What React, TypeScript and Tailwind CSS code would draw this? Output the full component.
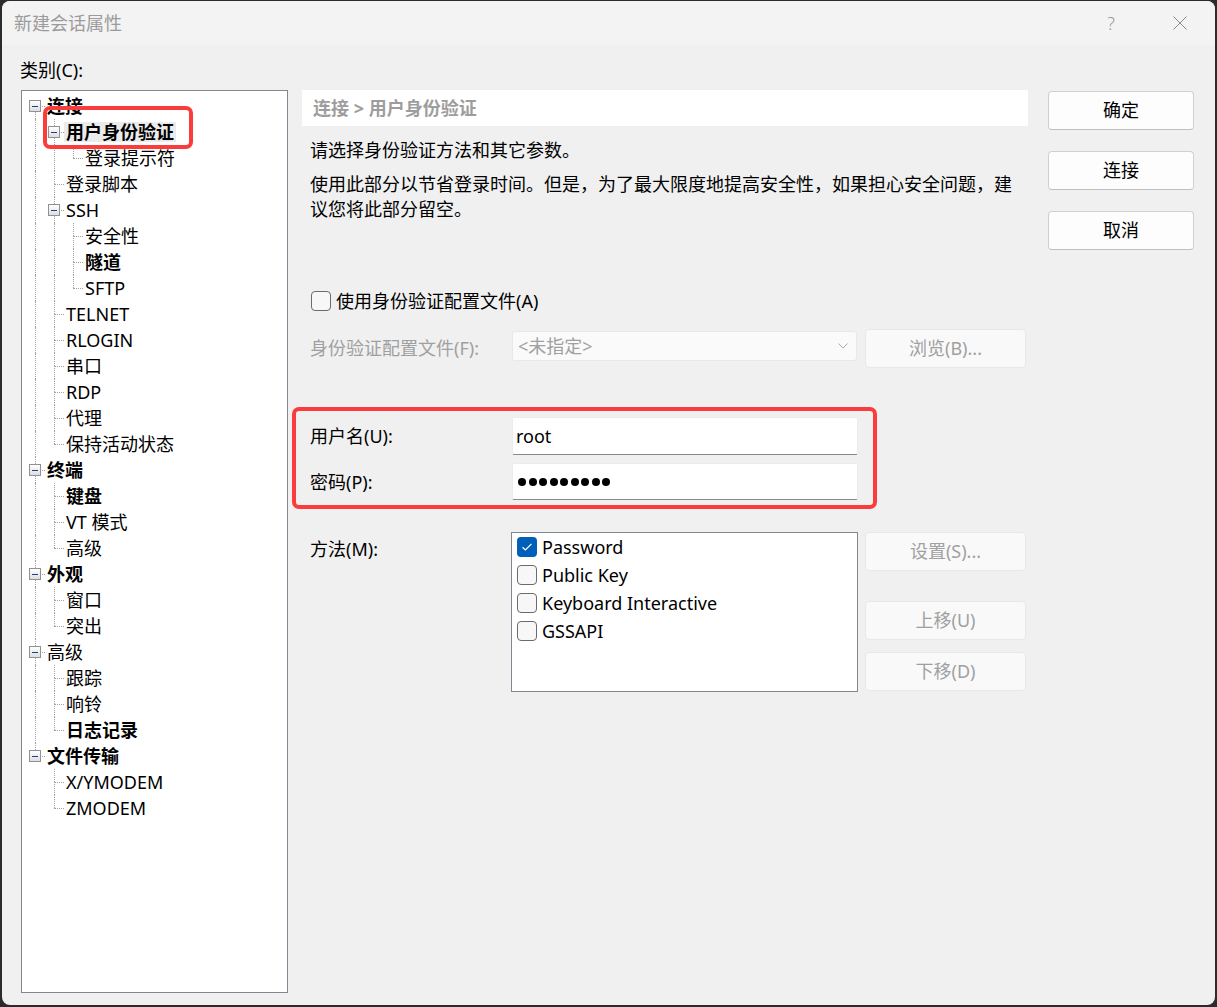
import React from 'react';

type TreeNode = { label: string; bold?: boolean; selected?: boolean; children?: TreeNode[] };

const tree: TreeNode[] = [
  {
    label: '连接',
    bold: true,
    children: [
      { label: '用户身份验证', bold: true, selected: true, children: [{ label: '登录提示符' }] },
      { label: '登录脚本' },
      { label: 'SSH', children: [{ label: '安全性' }, { label: '隧道', bold: true }, { label: 'SFTP' }] },
      { label: 'TELNET' },
      { label: 'RLOGIN' },
      { label: '串口' },
      { label: 'RDP' },
      { label: '代理' },
      { label: '保持活动状态' },
    ],
  },
  { label: '终端', bold: true, children: [{ label: '键盘', bold: true }, { label: 'VT 模式' }, { label: '高级' }] },
  { label: '外观', bold: true, children: [{ label: '窗口' }, { label: '突出' }] },
  { label: '高级', children: [{ label: '跟踪' }, { label: '响铃' }, { label: '日志记录', bold: true }] },
  { label: '文件传输', bold: true, children: [{ label: 'X/YMODEM' }, { label: 'ZMODEM' }] },
];

type Row = { node: TreeNode; level: number; first: boolean; last: boolean; rails: boolean[] };

const flatten = (nodes: TreeNode[], level: number, rails: boolean[], out: Row[]) => {
  nodes.forEach((node, i) => {
    const last = i === nodes.length - 1;
    out.push({ node, level, first: i === 0, last, rails });
    if (node.children) flatten(node.children, level + 1, [...rails, !last], out);
  });
  return out;
};

const rows = flatten(tree, 0, [], []);

// column positions per level (content-relative)
const colX = ['left-[13px]', 'left-[32px]', 'left-[51px]'];
const boxX = ['left-[7px]', 'left-[26px]', 'left-[45px]'];
const padL = ['pl-[23px]', 'pl-[42px]', 'pl-[61px]'];

const dotted = 'absolute border-dotted border-[#a0a0a0]';

const TreeRow = ({ row }: { row: Row }) => {
  const { node, level, first, last, rails } = row;
  return (
    <div className={`relative h-[26px] flex items-center ${padL[level]}`}>
      {rails.map((on, a) => (on ? <span key={a} className={`${dotted} top-0 bottom-0 border-l ${colX[a]}`} /> : null))}
      {!(level === 0 && first) && <span className={`${dotted} top-0 h-[13px] border-l ${colX[level]}`} />}
      {!last && <span className={`${dotted} top-[13px] bottom-0 border-l ${colX[level]}`} />}
      <span className={`${dotted} top-[13px] w-[10px] border-t ${colX[level]}`} />
      {node.children && (
        <span
          className={`absolute top-[7px] ${boxX[level]} w-[12px] h-[12px] border border-[#919191] bg-linear-to-b from-white to-[#dedede] flex items-center justify-center`}
        >
          <span className="w-[6px] h-[1px] bg-[#1c3f94]" />
        </span>
      )}
      <span
        className={`px-[2px] leading-[20px] whitespace-nowrap text-black ${node.bold ? 'font-bold' : ''} ${
          node.selected ? 'bg-[#ebebeb]' : ''
        }`}
      >
        {node.label}
      </span>
    </div>
  );
};

const CheckBox = ({ checked }: { checked?: boolean }) =>
  checked ? (
    <span className="w-[20px] h-[20px] rounded-[4px] bg-[#005fb8] flex items-center justify-center shrink-0">
      <svg width="20" height="20" viewBox="0 0 20 20">
        <path d="M5.5 10.2 L8.4 13 L14.5 6.8" fill="none" stroke="white" strokeWidth="1.2" />
      </svg>
    </span>
  ) : (
    <span className="w-[20px] h-[20px] rounded-[4px] border border-[#6b6b6b] bg-[#f7f7f7] shrink-0" />
  );

const DisabledButton = ({ children, className = '' }: { children: React.ReactNode; className?: string }) => (
  <div
    className={`w-[161px] h-[39px] rounded-[4px] bg-[#f9f9f9] border border-[#e8e8e8] flex items-center justify-center text-[#a0a0a0] ${className}`}
  >
    {children}
  </div>
);

const DialogButton = ({ children, className = '' }: { children: React.ReactNode; className?: string }) => (
  <div
    className={`h-[39px] rounded-[4px] bg-[#fdfdfd] border border-[#d0d0d0] border-b-[#c0c0c0] flex items-center justify-center text-black ${className}`}
  >
    {children}
  </div>
);

export default function App() {
  return (
    <div className="w-[1217px] h-[1007px] bg-[#2b2b2b] pt-[1px] pl-[2px] pr-[2px] pb-[2px] font-['Noto_Sans','Noto_Sans_CJK_SC',sans-serif] text-[18px]">
      <div className="w-full h-full rounded-[8px] overflow-hidden bg-[#f0f0f0] flex flex-col">
        {/* title bar */}
        <div className="h-[44px] bg-[#f3f3f3] flex items-center pl-[12px] pr-[28px] text-[#9b9b9b]">
          <span>新建会话属性</span>
          <span className="ml-auto w-[20px] text-center font-light">?</span>
          <svg className="ml-[52px]" width="14" height="14" viewBox="0 0 14 14">
            <path d="M0.5 0.5 L13.5 13.5 M13.5 0.5 L0.5 13.5" stroke="#8c8c8c" strokeWidth="1" />
          </svg>
        </div>

        {/* body */}
        <div className="flex-1 flex pl-[19px] pr-[21px]">
          {/* category tree */}
          <div className="w-[267px] flex flex-col">
            <div className="mt-[12px] h-[26px] leading-[26px] -ml-[1px] text-black">类别(C):</div>
            <div className="relative mt-[7px] h-[903px] bg-white border border-[#828790] pt-[2px]">
              {rows.map((row, i) => (
                <TreeRow key={i} row={row} />
              ))}
              <div className="absolute left-[21px] top-[15px] w-[150px] h-[43px] border-[4px] border-[#fa3c3c] rounded-[7px]" />
            </div>
          </div>

          {/* settings panel */}
          <div className="relative ml-[14px] w-[726px] pt-[45px]">
            <div className="h-[36px] bg-white pl-[11px] flex items-center font-bold text-[#9d9d9d]">
              连接 &gt; 用户身份验证
            </div>
            <p className="mt-[12px] pl-[8px] leading-[25px] text-black">请选择身份验证方法和其它参数。</p>
            <p className="mt-[9px] pl-[8px] leading-[25px] text-black">
              使用此部分以节省登录时间。但是，为了最大限度地提高安全性，如果担心安全问题，建议您将此部分留空。
            </p>

            <div className="mt-[66px] h-[26px] pl-[9px] flex items-center gap-[5px] text-black">
              <CheckBox />
              <span>使用身份验证配置文件(A)</span>
            </div>

            <div className="mt-[15px] h-[38px] flex items-start">
              <div className="w-[210px] pl-[8px] leading-[38px] text-[#a0a0a0]">身份验证配置文件(F):</div>
              <div className="mt-[2px] w-[345px] h-[30px] bg-[#fafafa] border border-[#e8e8e8] rounded-[3px] flex items-center justify-between pl-[5px] pr-[8px] text-[#a0a0a0]">
                <span>&lt;未指定&gt;</span>
                <svg width="10" height="6" viewBox="0 0 10 6">
                  <path d="M0.5 0.5 L5 5 L9.5 0.5" fill="none" stroke="#a8a8a8" strokeWidth="1" />
                </svg>
              </div>
              <DisabledButton className="ml-[8px] h-[38px]">浏览(B)...</DisabledButton>
            </div>

            <div className="mt-[50px] h-[38px] flex items-start">
              <div className="w-[210px] pl-[8px] leading-[38px] text-black">用户名(U):</div>
              <div className="w-[346px] h-[38px] bg-white border border-[#ececec] border-b-[#8a8a8a] rounded-[2px] pl-[3px] flex items-center text-black">
                root
              </div>
            </div>

            <div className="mt-[8px] h-[37px] flex items-start">
              <div className="w-[210px] pl-[8px] leading-[38px] text-black">密码(P):</div>
              <div className="w-[346px] h-[37px] bg-white border border-[#ececec] border-b-[#8a8a8a] rounded-[2px] pl-[5px] flex items-center gap-[2.5px]">
                {Array.from({ length: 9 }).map((_, i) => (
                  <span key={i} className="w-[8px] h-[8px] rounded-full bg-black" />
                ))}
              </div>
            </div>

            <div className="mt-[32px] flex items-start">
              <div className="w-[209px] pl-[8px] leading-[34px] text-black">方法(M):</div>
              <div className="w-[347px] h-[160px] bg-white border border-[#828790] text-black">
                {[
                  { label: 'Password', checked: true },
                  { label: 'Public Key' },
                  { label: 'Keyboard Interactive' },
                  { label: 'GSSAPI' },
                ].map((m) => (
                  <div key={m.label} className="h-[28px] pl-[5px] flex items-center gap-[5px]">
                    <CheckBox checked={m.checked} />
                    <span>{m.label}</span>
                  </div>
                ))}
              </div>
              <div className="ml-[7px] flex flex-col">
                <DisabledButton>设置(S)...</DisabledButton>
                <DisabledButton className="mt-[30px]">上移(U)</DisabledButton>
                <DisabledButton className="mt-[12px]">下移(D)</DisabledButton>
              </div>
            </div>

            <div className="absolute left-[-10px] top-[362px] w-[585px] h-[102px] border-[4px] border-[#fa3c3c] rounded-[7px]" />
          </div>

          {/* dialog buttons */}
          <div className="ml-[20px] w-[146px] pt-[46px] flex flex-col">
            <DialogButton>确定</DialogButton>
            <DialogButton className="mt-[21px]">连接</DialogButton>
            <DialogButton className="mt-[21px]">取消</DialogButton>
          </div>
        </div>
      </div>
    </div>
  );
}
